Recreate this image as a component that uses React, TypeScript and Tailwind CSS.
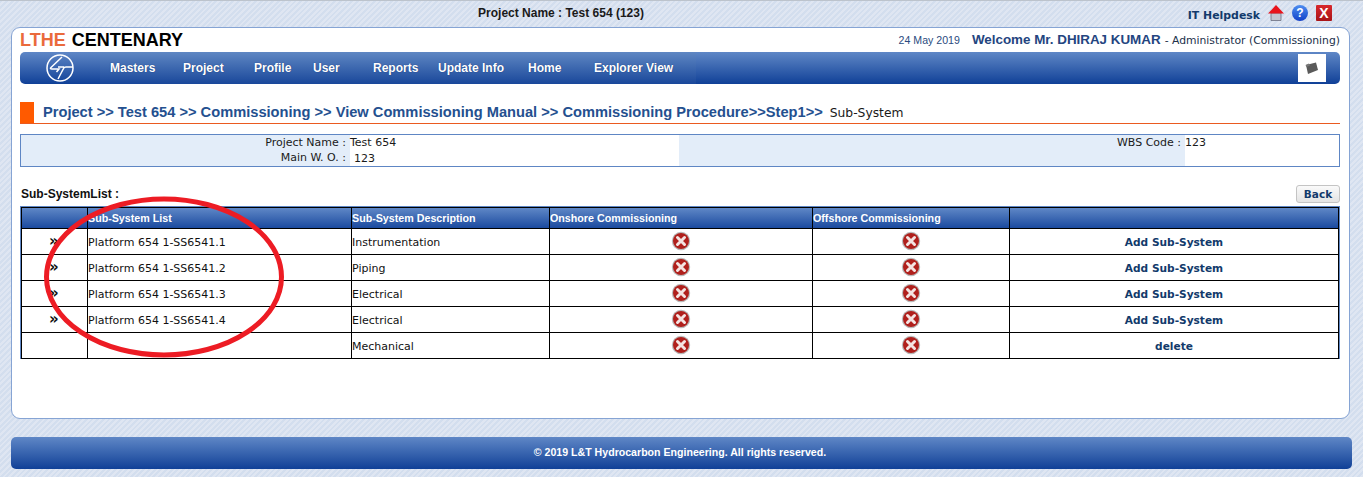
const rows = [
  { a: true, sys: "Platform 654 1-SS6541.1", desc: "Instrumentation", act: "Add Sub-System" },
  { a: true, sys: "Platform 654 1-SS6541.2", desc: "Piping", act: "Add Sub-System" },
  { a: true, sys: "Platform 654 1-SS6541.3", desc: "Electrical", act: "Add Sub-System" },
  { a: true, sys: "Platform 654 1-SS6541.4", desc: "Electrical", act: "Add Sub-System" },
  { a: false, sys: "", desc: "Mechanical", act: "delete" },
];

function XIcon() {
  return (
    <svg width="20" height="20" viewBox="0 0 20 20" className="block">
      <circle cx="10" cy="10" r="9.2" fill="#b9b9b9" />
      <circle cx="10" cy="10" r="8" fill="#b0201c" />
      <path d="M6.5 6.5 13.5 13.5M13.5 6.5 6.5 13.5" stroke="#f4e4e2" strokeWidth="3" strokeLinecap="round" />
    </svg>
  );
}

function Logo() {
  return (
    <svg width="30" height="30" viewBox="0 0 30 30" fill="none" stroke="#fff" strokeWidth="1.5" className="block">
      <circle cx="15" cy="15" r="13" />
      <path d="M17 4 6 14.5Q4.5 16 7 16H14L11.5 19" />
      <path d="M13 26 18.5 15.5Q19 14 21 14H28M19 14H13" />
    </svg>
  );
}

export default function App() {
  return (
    <div className="relative h-[477px] w-[1363px] overflow-hidden border-t border-[#bcc3cc] bg-[#d7e0ef] bg-[repeating-linear-gradient(135deg,#d3deee_0px,#d3deee_2px,#dfe6f2_2px,#dfe6f2_4px)] font-['Liberation_Sans',sans-serif]">
      <div className="flex h-[26px] items-center pl-[11px] pr-[31px]">
        <div className="w-[1100px] pb-[2px] text-center text-[12px] font-bold text-[#1a1a1a]">Project Name : Test 654 (123)</div>
        <div className="ml-auto flex items-center">
          <span className="mt-[4px] font-['DejaVu_Sans',sans-serif] text-[10.9px] font-bold text-[#123a6b]">IT Helpdesk</span>
          <svg width="16" height="16" viewBox="0 0 16 16" className="ml-[8px] mb-[2px]">
            <path d="M3 8H13V15.5H3Z" fill="#c3c6d2" stroke="#6b6f80" strokeWidth="0.8" />
            <path d="M8 0 16 8.5H0Z" fill="#e8141c" />
          </svg>
          <div className="ml-[8px] mb-[2px] flex h-[16px] w-[16px] items-center justify-center rounded-full bg-gradient-to-b from-[#4f8df0] to-[#1440c8] text-[12px] font-bold leading-none text-white">?</div>
          <div className="ml-[8px] mb-[2px] flex h-[16px] w-[16px] items-center justify-center rounded-[1px] bg-gradient-to-b from-[#d8282c] to-[#a81418] text-[14px] font-bold leading-none text-white">X</div>
        </div>
      </div>

      <div className="ml-[11px] h-[392px] w-[1339px] rounded-[9px] border border-[#86a4d4] bg-white pl-[8px] pr-[9px]">
        <div className="flex h-[24px] items-center justify-between">
          <div className="text-[18px] font-bold leading-none">
            <span className="text-[#ea6a3c]">LTHE</span> <span className="ml-[1px] text-black">CENTENARY</span>
          </div>
          <div className="flex items-baseline">
            <span className="text-[10.6px] text-[#2a4b80]">24 May 2019</span>
            <span className="ml-[12px] text-[13.4px] font-bold text-[#24457f]">Welcome Mr. DHIRAJ KUMAR</span>
            <span className="ml-[4px] font-['DejaVu_Sans',sans-serif] text-[10.8px] text-[#20304a]">- Administrator (Commissioning)</span>
          </div>
        </div>

        <div className="flex h-[32px] items-center rounded-[5px] bg-gradient-to-b from-[#5f87c6] to-[#0f4097] pr-[14px]">
          <div className="ml-[25px] w-[55px] shrink-0"><Logo /></div>
          <nav className="flex h-full w-[596px] items-center bg-gradient-to-b from-[#5f87c3] to-[#19479a] text-[12px] font-bold text-white [text-shadow:0_0_1px_#0d2f70]">
            <span className="ml-[10px] w-[73px]">Masters</span>
            <span className="w-[71px]">Project</span>
            <span className="w-[59px]">Profile</span>
            <span className="w-[60px]">User</span>
            <span className="w-[65px]">Reports</span>
            <span className="w-[90px]">Update Info</span>
            <span className="w-[66px]">Home</span>
            <span>Explorer View</span>
          </nav>
          <div className="ml-auto flex h-[28px] w-[28px] items-center justify-center bg-white">
            <svg width="14" height="13" viewBox="0 0 14 13">
              <path d="M1 3 11 0.5 13 8 3 12Z" fill="#5a5a5a" />
              <path d="M0.5 3 4 1.5 5 3.5 1.5 5Z" fill="#777" />
            </svg>
          </div>
        </div>

        <div className="mt-[18px] flex h-[22px] items-center border-b border-[#ea5a20]">
          <div className="h-[21px] w-[14px] bg-[#ff5a00]" />
          <div className="ml-[9px] text-[14.65px] font-bold text-[#24508f]">
            Project &gt;&gt; Test 654 &gt;&gt; Commissioning &gt;&gt; View Commissioning Manual &gt;&gt; Commissioning Procedure&gt;&gt;Step1&gt;&gt;
            <span className="ml-[7px] font-['DejaVu_Sans',sans-serif] text-[12.3px] font-normal text-[#1a1a1a]">Sub-System</span>
          </div>
        </div>

        <div className="mt-[10px] grid h-[33px] grid-cols-[329px_329px_506px_154px] border border-[#5e86c4] pt-0 font-['DejaVu_Sans',sans-serif] text-[11px] text-[#1a1a1a]">
          <div className="bg-[#e3edf9] pr-[4px] pt-[1px] text-right leading-[14px]">
            <div>Project Name :</div>
            <div className="mt-[1px]">Main W. O. :</div>
          </div>
          <div className="pt-[1px] leading-[14px]">
            <div>Test 654</div>
            <div className="ml-[4px] mt-[2px]">123</div>
          </div>
          <div className="bg-[#e3edf9] pr-[4px] pt-[1px] text-right leading-[14px]">WBS Code :</div>
          <div className="pt-[1px] leading-[14px]">123</div>
        </div>

        <div className="mt-[17px] flex h-[22px] items-end justify-between">
          <div className="mb-[3px] pl-[1px] text-[12px] font-bold text-[#111]">Sub-SystemList :</div>
          <button className="mb-[3px] h-[18px] w-[44px] rounded-[3px] border border-[#c4c4c4] bg-gradient-to-b from-[#fafafa] to-[#e4e4e4] font-['DejaVu_Sans',sans-serif] text-[10.5px] font-bold leading-none text-[#123a6b]">Back</button>
        </div>

        <div className="border border-b-0 border-[#5e86c4]">
          <table className="w-full table-fixed border-collapse border-b border-black text-[11px]">
            <colgroup>
              <col className="w-[66px]" />
              <col className="w-[264px]" />
              <col className="w-[198px]" />
              <col className="w-[263px]" />
              <col className="w-[197px]" />
              <col />
            </colgroup>
            <thead>
              <tr className="h-[21px] bg-gradient-to-b from-[#5f87c6] to-[#17479d] text-left text-[10.7px] font-bold text-white">
                <th className="border border-black" />
                <th className="border border-black px-0 font-bold">Sub-System List</th>
                <th className="border border-black px-0 font-bold">Sub-System Description</th>
                <th className="border border-black px-0 font-bold">Onshore Commissioning</th>
                <th className="border border-black px-0 font-bold">Offshore Commissioning</th>
                <th className="border border-black" />
              </tr>
            </thead>
            <tbody className="font-['DejaVu_Sans',sans-serif] text-[11px] text-[#111]">
              {rows.map((r) => (
                <tr key={r.desc + r.sys} className="h-[26px]">
                  <td className="border border-black pl-[27px] text-[15px] font-bold leading-none">{r.a ? "»" : ""}</td>
                  <td className="border border-black px-0 pt-[4px]">{r.sys}</td>
                  <td className="border border-black px-0 pt-[4px]">{r.desc}</td>
                  <td className="border border-black pb-[2px]"><div className="flex justify-center"><XIcon /></div></td>
                  <td className="border border-black pb-[2px]"><div className="flex justify-center"><XIcon /></div></td>
                  <td className="border border-black pt-[3px] text-center text-[10.6px] font-bold text-[#123a6b]">{r.act}</td>
                </tr>
              ))}
            </tbody>
          </table>
        </div>
      </div>

      <div className="ml-[11px] mt-[18px] flex h-[32px] w-[1341px] items-center justify-center rounded-[5px] bg-gradient-to-b from-[#5f87c6] to-[#0f4097] pr-[3px] text-[10.6px] font-bold text-white">
        © 2019 L&amp;T Hydrocarbon Engineering. All rights reserved.
      </div>

      <svg className="pointer-events-none absolute left-[40px] top-[190px]" width="250" height="172" viewBox="0 0 250 172" fill="none">
        <ellipse cx="124" cy="86" rx="117.5" ry="78" stroke="#ed1c24" strokeWidth="5" />
      </svg>
    </div>
  );
}
